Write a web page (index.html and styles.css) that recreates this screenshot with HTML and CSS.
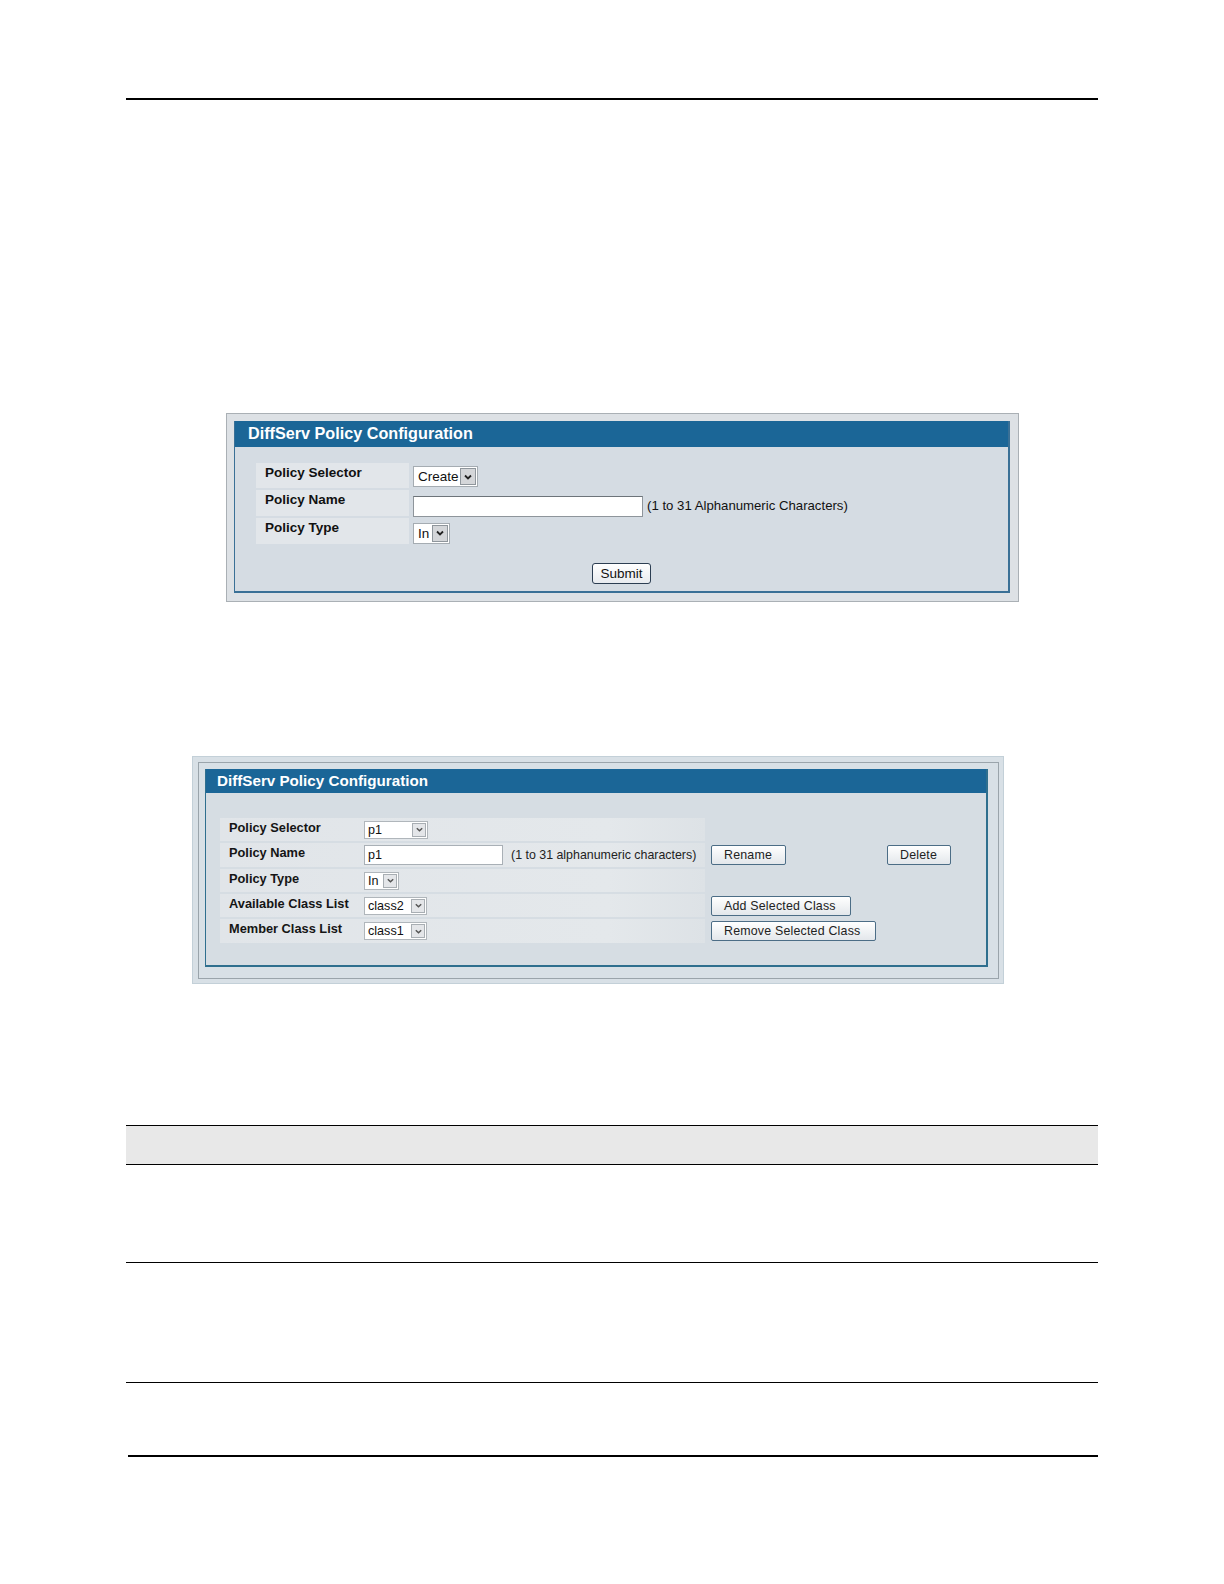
FILE: index.html
```html
<!DOCTYPE html>
<html>
<head>
<meta charset="utf-8">
<title>DiffServ Policy Configuration</title>
<link rel="stylesheet" href="styles.css">
</head>
<body>
<div class="page">
  <div class="rule-top"></div>

  <div class="shot shot1">
    <div class="panel panel1">
      <div class="panel-title t1">DiffServ Policy Configuration</div>
      <div class="panel-body body1">
        <div class="rows1">
          <div class="row1 h25">
            <div class="lbl1">Policy Selector</div>
            <div class="val1">
              <span class="sel sel1 w-create"><span class="sel-text">Create</span><span class="sel-arrow"><svg viewBox="0 0 10 10" width="10" height="10"><path d="M2 3.5 L5 6.5 L8 3.5" fill="none" stroke="#222" stroke-width="1.8"/></svg></span></span>
            </div>
          </div>
          <div class="row1 h26">
            <div class="lbl1">Policy Name</div>
            <div class="val1">
              <span class="inp inp1"></span><span class="hint1">(1 to 31 Alphanumeric Characters)</span>
            </div>
          </div>
          <div class="row1 h26">
            <div class="lbl1">Policy Type</div>
            <div class="val1">
              <span class="sel sel1 w-in1"><span class="sel-text">In</span><span class="sel-arrow"><svg viewBox="0 0 10 10" width="10" height="10"><path d="M2 3.5 L5 6.5 L8 3.5" fill="none" stroke="#222" stroke-width="1.8"/></svg></span></span>
            </div>
          </div>
        </div>
        <div class="submit-wrap"><span class="btn1">Submit</span></div>
      </div>
    </div>
  </div>

  <div class="shot shot2">
    <div class="shot2-inner">
      <div class="panel panel2">
        <div class="panel-title t2">DiffServ Policy Configuration</div>
        <div class="panel-body body2">
          <div class="line2 h23">
            <div class="row2"><div class="lbl2">Policy Selector</div><div class="val2"><span class="sel sel2 w-p1"><span class="sel-text">p1</span><span class="sel-arrow a2"><svg viewBox="0 0 10 10" width="9" height="9"><path d="M2 3.5 L5 6.5 L8 3.5" fill="none" stroke="#555" stroke-width="1.6"/></svg></span></span></div></div>
          </div>
          <div class="line2 h24">
            <div class="row2"><div class="lbl2">Policy Name</div><div class="val2"><span class="inp inp2">p1</span><span class="hint2">(1 to 31 alphanumeric characters)</span></div></div>
            <div class="acts"><span class="btn2 b-rename">Rename</span><span class="btn2 b-delete">Delete</span></div>
          </div>
          <div class="line2 h23">
            <div class="row2"><div class="lbl2">Policy Type</div><div class="val2"><span class="sel sel2 w-in2"><span class="sel-text">In</span><span class="sel-arrow a2"><svg viewBox="0 0 10 10" width="9" height="9"><path d="M2 3.5 L5 6.5 L8 3.5" fill="none" stroke="#555" stroke-width="1.6"/></svg></span></span></div></div>
          </div>
          <div class="line2 h23">
            <div class="row2"><div class="lbl2">Available Class List</div><div class="val2"><span class="sel sel2 w-class"><span class="sel-text">class2</span><span class="sel-arrow a2"><svg viewBox="0 0 10 10" width="9" height="9"><path d="M2 3.5 L5 6.5 L8 3.5" fill="none" stroke="#555" stroke-width="1.6"/></svg></span></span></div></div>
            <div class="acts"><span class="btn2 b-add">Add Selected Class</span></div>
          </div>
          <div class="line2 h24">
            <div class="row2"><div class="lbl2">Member Class List</div><div class="val2"><span class="sel sel2 w-class"><span class="sel-text">class1</span><span class="sel-arrow a2"><svg viewBox="0 0 10 10" width="9" height="9"><path d="M2 3.5 L5 6.5 L8 3.5" fill="none" stroke="#555" stroke-width="1.6"/></svg></span></span></div></div>
            <div class="acts"><span class="btn2 b-remove">Remove Selected Class</span></div>
          </div>
        </div>
      </div>
    </div>
  </div>

  <div class="doc-table">
    <div class="tr th"></div>
    <div class="tr r1"></div>
    <div class="tr r2"></div>
    <div class="tr r3"></div>
  </div>

  <div class="rule-bottom"></div>
</div>
</body>
</html>
```

FILE: styles.css
```css
* { box-sizing: border-box; }
html, body { margin: 0; padding: 0; background: #fff; }
body { font-family: "Liberation Sans", Arial, sans-serif; color: #111; }

.page { width: 972px; margin-left: 126px; }

.rule-top { height: 2px; background: #000; margin-top: 98px; }

.shot { display: block; }

/* ---------- Figure 1 ---------- */
.shot1 {
  margin-top: 313px;
  margin-left: 100px;
  width: 793px;
  height: 189px;
  background: #dde1e5;
  border: 1px solid #aab0b5;
  padding: 7px 8px 8px 7px;
}
.panel {
  display: flex;
  flex-direction: column;
  height: 100%;
  background: #d5dce3;
  border: 1px solid #3a7096;
  border-top: 0;
}
.panel1 { border-width: 0 2px 2px 1px; }
.panel-title {
  background: #1b6697;
  color: #fff;
  font-weight: bold;
  white-space: nowrap;
}
.t1 { height: 26px; font-size: 16.2px; line-height: 25px; padding-left: 13px; }
.body1 { flex: 1; padding: 16px 0 0 21px; display: flex; flex-direction: column; }
.rows1 { display: flex; flex-direction: column; gap: 2px; }
.row1 { display: flex; }
.h25 { height: 25px; }
.h26 { height: 26px; }
.lbl1 {
  width: 153px;
  background: #e2e6ea;
  font-weight: bold;
  font-size: 13.5px;
  padding: 2px 0 0 9px;
  color: #111;
}
.val1 { display: flex; align-items: center; padding-left: 4px; }
.hint1 { font-size: 13.2px; margin-left: 4px; margin-top: 5px; color: #111; }

.sel {
  display: inline-flex;
  align-items: stretch;
  background: #fff;
  border: 1px solid #a5acb2;
}
.sel-text { flex: 1; padding-left: 4px; }
.sel-arrow {
  width: 16px;
  display: flex;
  align-items: center;
  justify-content: center;
  background: #d4d6d9;
  border: 1px solid #8f969c;
  margin: 1px;
}
.sel1 { height: 21px; font-size: 13.5px; line-height: 19px; margin-top: 2px; }
.w-create { width: 65px; }
.w-in1 { width: 37px; margin-top: 4px; }

.inp { display: inline-block; background: #fff; border: 1px solid #8e959b; border-top-color: #6d747a; }
.inp1 { width: 230px; height: 21px; margin-top: 6px; }

.submit-wrap { display: flex; justify-content: center; margin-top: 19px; padding-right: 21px; }
.btn1 {
  display: inline-flex;
  align-items: center;
  justify-content: center;
  width: 59px;
  height: 21px;
  font-size: 13.5px;
  background: linear-gradient(#ffffff, #e8ebef);
  border: 1px solid #2c3e52;
  border-radius: 3px;
  color: #111;
}

/* ---------- Figure 2 ---------- */
.shot2 {
  margin-top: 154px;
  margin-left: 66px;
  width: 812px;
  height: 228px;
  background: #d8e0e6;
  border: 1px solid #c3d0d8;
  padding: 5px 4px 4px 5px;
}
.shot2-inner {
  height: 100%;
  border: 1px solid #9aa4ab;
  padding: 6px 10px 11px 6px;
}
.panel2 { border-width: 0 2px 2px 1px; border-color: #2f6f8e; background: #d6dde3; }
.t2 { height: 24px; font-size: 15.2px; line-height: 23px; padding-left: 11px; }
.body2 { flex: 1; padding: 25px 0 0 14px; display: flex; flex-direction: column; gap: 2px; }
.line2 { display: flex; align-items: stretch; }
.h23 { height: 23px; }
.h24 { height: 24px; }
.row2 {
  width: 485px;
  display: flex;
  background: linear-gradient(90deg, #e1e5e9 0%, #e4e8eb 80%, #dde2e6 100%);
}
.lbl2 {
  width: 143px;
  font-weight: bold;
  font-size: 12.8px;
  padding: 2px 0 0 9px;
  white-space: nowrap;
  color: #151515;
}
.val2 { display: flex; align-items: center; padding-left: 1px; }
.sel2 { height: 18px; font-size: 12.6px; line-height: 16px; border-color: #b0b6bb; }
.sel2 .sel-text { padding-left: 3px; }
.a2 { width: 14px; background: #e4e6e9; border-color: #a8aeb3; }
.w-p1 { width: 64px; }
.w-in2 { width: 35px; }
.w-class { width: 63px; }
.inp2 { width: 139px; height: 20px; font-size: 12.6px; line-height: 18px; padding-left: 3px; border-color: #a9b0b6; }
.hint2 { font-size: 12.4px; margin-left: 8px; color: #222; }

.acts { display: flex; align-items: center; padding-left: 6px; }
.btn2 {
  display: inline-flex;
  align-items: center;
  padding-left: 12px;
  height: 20px;
  font-size: 12.4px;
  letter-spacing: 0.2px;
  color: #222;
  background: linear-gradient(#ffffff, #e3e7eb);
  border: 1px solid #4c6d86;
  border-radius: 2px;
}
.b-rename { width: 75px; }
.b-delete { width: 64px; margin-left: 101px; }
.b-add { width: 140px; }
.b-remove { width: 165px; }

/* ---------- Table ---------- */
.doc-table { margin-top: 141px; border-top: 1px solid #000; }
.tr { border-bottom: 1px solid #000; }
.th { height: 39px; background: #e8e8e8; }
.r1 { height: 98px; }
.r2 { height: 120px; }
.r3 { height: 72px; border-bottom: 0; }

.rule-bottom { height: 2px; background: #000; margin-left: 2px; }
```
